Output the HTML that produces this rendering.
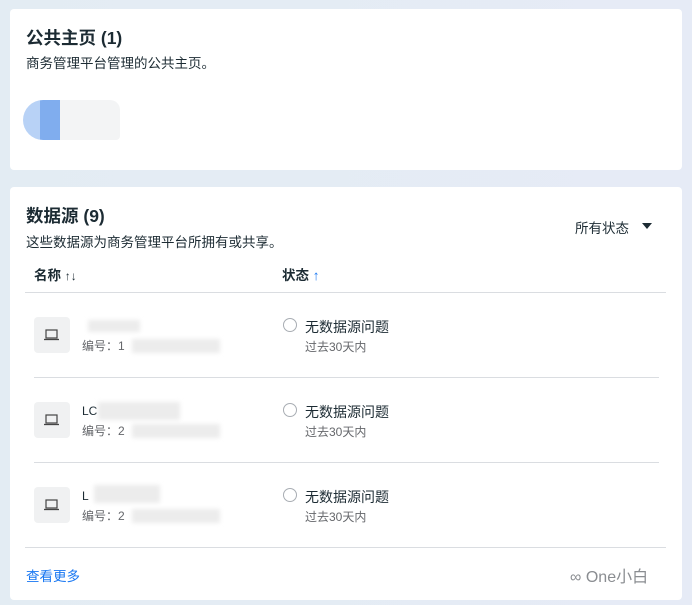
<!DOCTYPE html>
<html><head><meta charset="utf-8"><style>
*{margin:0;padding:0;box-sizing:border-box}
body{width:692px;height:605px;overflow:hidden;background:linear-gradient(90deg,#e3ecf3,#e6ebf6);font-family:"Liberation Sans","Noto Sans CJK SC",sans-serif;color:#1c2b33;position:relative}
.card{position:absolute;left:10px;width:672px;background:#fff;border-radius:4px}
.a{position:absolute;white-space:nowrap}
.h{font-size:17.5px;font-weight:bold}
.s{font-size:12px}
.sub{font-size:13.5px}
.line{position:absolute;height:1px;background:#dadde1}
.ib{position:absolute;left:24px;width:36px;height:36px;background:#f0f1f2;border-radius:4px}
.blur{position:absolute;background:#ececec;filter:blur(2px)}
.rad{position:absolute;width:14px;height:14px;border:1.5px solid #a8adb3;border-radius:50%}
.st{font-size:14px}
</style></head><body>
<div class="card" style="top:9px;height:161px">
 <div class="a h" style="left:16px;top:16px">公共主页 (1)</div>
 <div class="a sub" style="left:16px;top:43px">商务管理平台管理的公共主页。</div>
 <div class="a" style="left:13px;top:91px;width:38px;height:40px;border-radius:20px 0 0 20px;background:linear-gradient(90deg,#b8d2f6 45%,#80adee 45%)"></div>
 <div class="a" style="left:50px;top:91px;width:60px;height:40px;background:#f3f4f5;border-radius:0 10px 4px 0"></div>
</div>
<div class="card" style="top:187px;height:413px">
 <div class="a h" style="left:16px;top:16px">数据源 (9)</div>
 <div class="a sub" style="left:16px;top:44px">这些数据源为商务管理平台所拥有或共享。</div>
 <div class="a sub" style="left:565px;top:30px">所有状态</div>
 <div class="a" style="left:632px;top:36px;border-left:5px solid transparent;border-right:5px solid transparent;border-top:6px solid #1c2b33"></div>
 <div class="a" style="left:24px;top:77px;font-size:13.5px;font-weight:bold">名称 <span style="font-weight:normal;font-size:12px">↑↓</span></div>
 <div class="a" style="left:272px;top:77px;font-size:13.5px;font-weight:bold">状态 <span style="color:#1877f2;font-weight:normal">↑</span></div>
 <div class="line" style="left:15px;width:641px;top:105px"></div>

 <div style="position:absolute;left:0;top:130px;width:672px">
  <div class="ib" style="top:0"><svg width="36" height="36"><rect x="12" y="13" width="11" height="8" fill="none" stroke="#444" stroke-width="1.2"/><path d="M10 22.5h15" stroke="#444" stroke-width="1.3"/></svg></div>
  <div class="blur" style="left:78px;top:3px;width:52px;height:12px"></div>
  <div class="a s" style="left:72px;top:20px;color:#65676b">编号：1</div>
  <div class="blur" style="left:122px;top:22px;width:88px;height:14px"></div>
  <div class="rad" style="left:273px;top:1px"></div>
  <div class="a st" style="left:295px;top:0px">无数据源问题</div>
  <div class="a s" style="left:295px;top:21px;color:#65676b">过去30天内</div>
 </div>
 <div class="line" style="left:24px;width:625px;top:190px"></div>

 <div style="position:absolute;left:0;top:215px;width:672px">
  <div class="ib" style="top:0"><svg width="36" height="36"><rect x="12" y="13" width="11" height="8" fill="none" stroke="#444" stroke-width="1.2"/><path d="M10 22.5h15" stroke="#444" stroke-width="1.3"/></svg></div>
  <div class="a s" style="left:72px;top:2px">LC</div>
  <div class="blur" style="left:88px;top:0;width:82px;height:18px"></div>
  <div class="a s" style="left:72px;top:20px;color:#65676b">编号：2</div>
  <div class="blur" style="left:122px;top:22px;width:88px;height:14px"></div>
  <div class="rad" style="left:273px;top:1px"></div>
  <div class="a st" style="left:295px;top:0px">无数据源问题</div>
  <div class="a s" style="left:295px;top:21px;color:#65676b">过去30天内</div>
 </div>
 <div class="line" style="left:24px;width:625px;top:275px"></div>

 <div style="position:absolute;left:0;top:300px;width:672px">
  <div class="ib" style="top:0"><svg width="36" height="36"><rect x="12" y="13" width="11" height="8" fill="none" stroke="#444" stroke-width="1.2"/><path d="M10 22.5h15" stroke="#444" stroke-width="1.3"/></svg></div>
  <div class="a s" style="left:72px;top:2px">L</div>
  <div class="blur" style="left:84px;top:-2px;width:66px;height:18px"></div>
  <div class="a s" style="left:72px;top:20px;color:#65676b">编号：2</div>
  <div class="blur" style="left:122px;top:22px;width:88px;height:14px"></div>
  <div class="rad" style="left:273px;top:1px"></div>
  <div class="a st" style="left:295px;top:0px">无数据源问题</div>
  <div class="a s" style="left:295px;top:21px;color:#65676b">过去30天内</div>
 </div>
 <div class="line" style="left:15px;width:641px;top:360px"></div>
 <div class="a" style="left:16px;top:378px;font-size:13.5px;color:#1877f2">查看更多</div>
 <div class="a" style="left:560px;top:376px;font-size:16px;color:#8a8d91">∞ One小白</div>
</div>
</body></html>
